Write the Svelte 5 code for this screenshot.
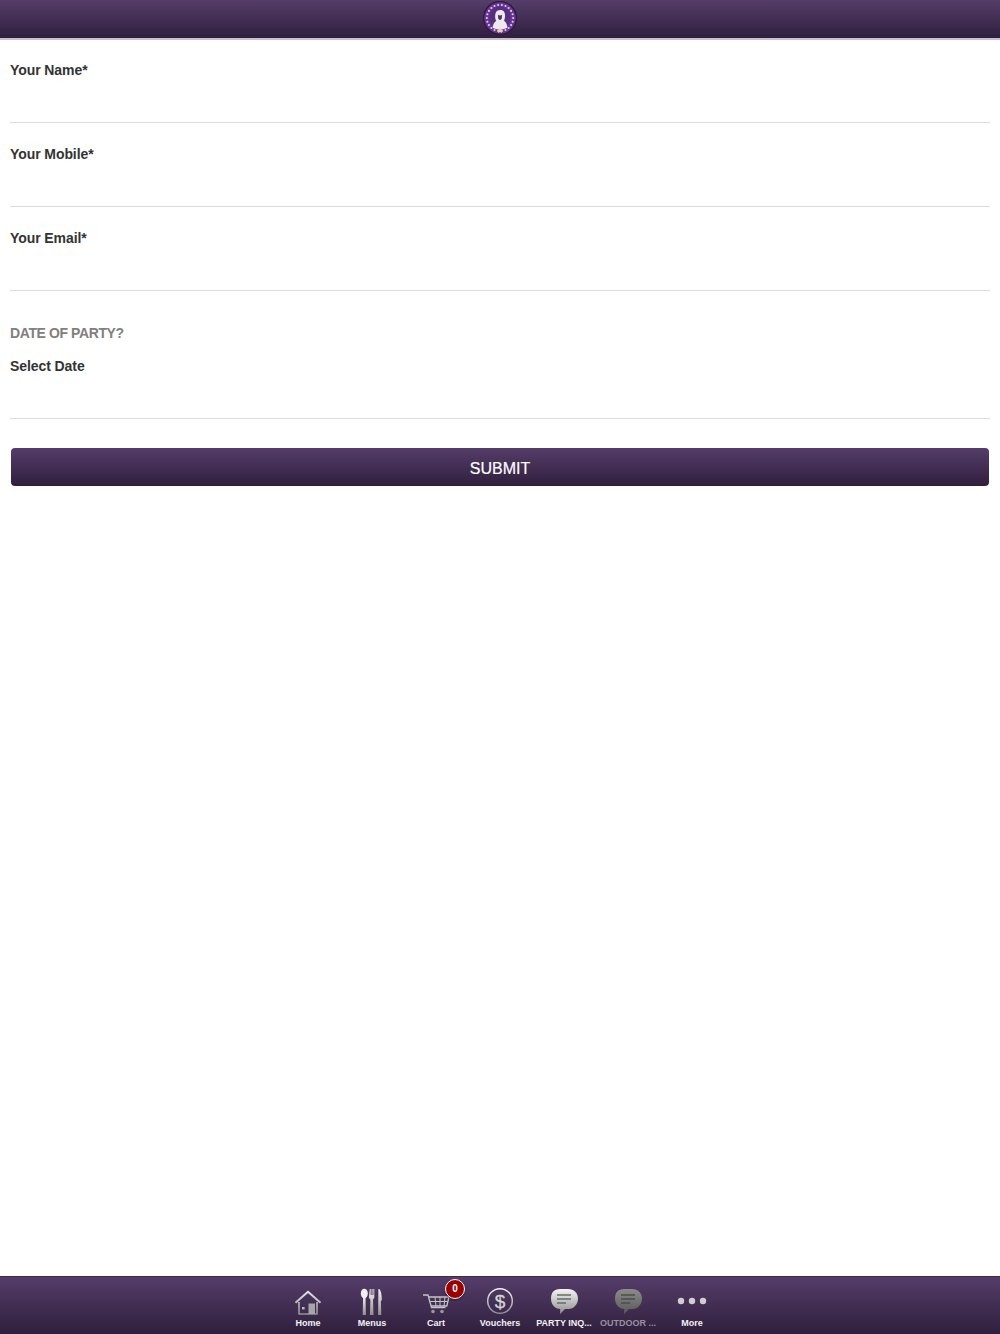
<script>
    const fields = ['Your Name*', 'Your Mobile*', 'Your Email*'];

    const tabs = [
        { id: 'home', label: 'Home' },
        { id: 'menus', label: 'Menus' },
        { id: 'cart', label: 'Cart', badge: 0 },
        { id: 'vouchers', label: 'Vouchers' },
        { id: 'party', label: 'PARTY INQ...' },
        { id: 'outdoor', label: 'OUTDOOR ...', dim: true },
        { id: 'more', label: 'More' }
    ];

    // the lettering round the badge is too small to read, so it is dots
    const ringDots = Array.from({ length: 22 }, (_, i) => {
        const a = (i / 22) * Math.PI * 2;
        return { x: 16 + Math.cos(a) * 12.4, y: 16 + Math.sin(a) * 12.4 };
    });
</script>

<div class="page">

    <header class="top-bar">
        <svg class="logo" width="34" height="34" viewBox="0 0 32 32">
            <circle cx="16" cy="16" r="16" fill="#2a1a38" />
            <circle cx="16" cy="16" r="14.8" fill="#6a3396" />
            {#each ringDots as dot}
                <circle cx={dot.x} cy={dot.y} r="1" fill="#d9cfe2" />
            {/each}
            <circle cx="16" cy="15.5" r="10" fill="#55307c" />
            <path d="M9 25c.4-3 1.600-5 3.400-6.200-1.200-2.400-1.400-6-.2-8.300 1.300-2.500 6.300-2.700 7.800-.2 1.200 2.200 1 5.700-.2 8.200 1.900 1.300 3 3.500 3.200 6.500-2 1.400-4.400 2-7 2s-5.200-.6-7-2z" fill="#efe9ef" />
            <path d="M14 13c1.200.8 2.900.8 4 0l-.4 3.800-1.600 1.200-1.600-1.200z" fill="#4a3560" />
            <path d="M16 25.400l1 1.600 1.800.2-1.300 1.200.3 1.700-1.800-.9-1.800.9.300-1.700-1.300-1.200 1.800-.2z" fill="#e8d8a0" />
        </svg>
    </header>

    <form class="form" on:submit|preventDefault>

        {#each fields as label}
            <div class="field">
                <div class="label">{label}</div>
            </div>
        {/each}

        <div class="heading">DATE OF PARTY?</div>

        <div class="field no-top">
            <div class="label">Select Date</div>
        </div>

        <button class="submit" type="submit">SUBMIT</button>

    </form>

    <nav class="tab-bar">
        <svg class="defs" width="0" height="0">
            <defs>
                <linearGradient id="shine" x1="0" y1="0" x2="0" y2="1">
                    <stop offset="0" stop-color="#f4f4f4" />
                    <stop offset="1" stop-color="#8e8e8e" />
                </linearGradient>
                <linearGradient id="shine-dim" x1="0" y1="0" x2="0" y2="1">
                    <stop offset="0" stop-color="#8c8c8c" />
                    <stop offset="1" stop-color="#585858" />
                </linearGradient>
                <linearGradient id="walls" gradientUnits="userSpaceOnUse" x1="0" y1="5" x2="0" y2="30">
                    <stop offset="0" stop-color="#ececec" />
                    <stop offset="1" stop-color="#8e8e8e" />
                </linearGradient>
            </defs>
        </svg>

        {#each tabs as tab}
            <div class="tab" class:dim={tab.dim}>
                <svg class="icon" width="32" height="32" viewBox="0 0 32 32">
                    {#if tab.id === 'home'}
                        <path d="M3.500 17.800 16 6.800l12.500 11" fill="none" stroke="url(#walls)" stroke-width="2" />
                        <path d="M7 17v12h18V17" fill="none" stroke="url(#walls)" stroke-width="1.600" />
                        <rect x="16.500" y="18.500" width="6.500" height="10.500" fill="#a6a6a6" />
                        <rect x="10" y="22" width="2.600" height="2.400" fill="#bcbcbc" />
                    {:else if tab.id === 'menus'}
                        <g transform="translate(1 1.500)">
                            <ellipse cx="7.300" cy="7" rx="3.500" ry="4.800" fill="#f0f0f0" />
                            <path d="M6.100 10h2.400l.4 18.500H5.700z" fill="url(#shine)" />
                            <path d="M12.800 2.500h.9v6h.9v-6h.9v6h.9v-6h.9v8.300c0 1.300-1 1.900-1.300 2.400l.5 15.300h-3.600l.5-15.300c-.3-.5-1.500-1.100-1.500-2.400z" fill="url(#shine)" />
                            <path d="M22.200 2.500c1.800 1.600 2.600 5.500 2.700 11l-1 1 .4 14h-3.200l.3-26z" fill="url(#shine)" />
                        </g>
                    {:else if tab.id === 'cart'}
                        <g fill="none" stroke="#c4c4c4" stroke-width="1.300">
                            <path d="M3 10h5l3.500 12.500h14" />
                            <path d="M8.800 12H29l-2.200 9H11" />
                            <path d="M10.300 16.500h17.600M15 12l1 9M20 12v9M25 12l-1 9" stroke-width="1" />
                        </g>
                        <circle cx="13" cy="26.500" r="1.800" fill="#9a9a9a" />
                        <circle cx="22" cy="26.500" r="1.800" fill="#9a9a9a" />
                    {:else if tab.id === 'vouchers'}
                        <circle cx="16" cy="16" r="12.300" fill="none" stroke="url(#shine)" stroke-width="1.500" />
                        <text x="16" y="22.800" class="dollar" text-anchor="middle">$</text>
                    {:else if tab.id === 'party' || tab.id === 'outdoor'}
                        <path d="M12 4h8c6 0 10 4 10 9.500S26 24 20.500 24H17l-5 5 .2-5C7 24 3 19.500 3 13.500S6 4 12 4z" fill={tab.dim ? 'url(#shine-dim)' : 'url(#shine)'} />
                        <path d="M9 10h14M9 14h14M9 18h9" stroke={tab.dim ? '#4c4c4c' : '#6a6a6a'} stroke-width="1.400" fill="none" />
                    {:else}
                        <circle cx="5" cy="16" r="3.200" fill="#cfcfcf" />
                        <circle cx="16" cy="16" r="3.200" fill="#cfcfcf" />
                        <circle cx="27" cy="16" r="3.200" fill="#cfcfcf" />
                    {/if}
                </svg>
                <span class="tab-label">{tab.label}</span>
                {#if tab.badge !== undefined}
                    <span class="badge">{tab.badge}</span>
                {/if}
            </div>
        {/each}
    </nav>

</div>

<style>

:global(body){
    margin:0;
    background:#fff;
}

.page{
    display:flex;
    flex-direction:column;
    height:1334px;
    font-family:"Liberation Sans", Arial, sans-serif;
    overflow:hidden;
}

.top-bar{
    display:flex;
    justify-content:center;
    flex:none;
    height:38px;
    background:linear-gradient(#553d69, #2f1f3d);
    border-bottom:2px solid #c9bdd3;
}

.logo{
    margin-top:1px;
}

.form{
    flex:1;
    display:flex;
    flex-direction:column;
    padding:0 10px;
}

.field{
    padding-top:21px;
    height:61px;
    margin-bottom:1px;
    border-bottom:1px solid #dcdcdc;
}

.no-top{
    padding-top:0;
}

.label{
    font-size:14px;
    line-height:18px;
    font-weight:700;
    letter-spacing:-.08px;
    color:#333;
}

.heading{
    margin-top:32px;
    margin-bottom:15px;
    font-size:14px;
    line-height:18px;
    font-weight:700;
    letter-spacing:-.4px;
    color:#808080;
}

.submit{
    margin:28px 1px 0;
    height:38px;
    padding:4px 0 0;
    border:none;
    border-radius:4px;
    background:linear-gradient(#553d69, #2f1f3d);
    color:#fff;
    font-family:inherit;
    font-size:16px;
    -webkit-text-stroke:.2px #fff;
}

.tab-bar{
    flex:none;
    display:flex;
    justify-content:center;
    height:58px;
    background:linear-gradient(#553d69, #2f1f3d);
    border-top:1px solid #3d2b4c;
    box-sizing:border-box;
}

.defs{
    position:absolute;
}

.tab{
    position:relative;
    display:flex;
    flex-direction:column;
    align-items:center;
    width:64px;
    padding-top:8px;
}

.icon{
    display:block;
}

.tab-label{
    font-size:9px;
    line-height:12px;
    font-weight:700;
    color:#f2f2f2;
    white-space:nowrap;
}

.dim .tab-label{
    color:#98909e;
}

.dollar{
    font-family:"Liberation Sans", Arial, sans-serif;
    font-size:19px;
    fill:#d4d4d4;
    stroke:#d4d4d4;
    stroke-width:.3px;
}

.badge{
    position:absolute;
    top:2px;
    left:41px;
    width:18px;
    height:18px;
    border:1.5px solid #fff;
    border-radius:50%;
    background:#9a0000;
    color:#fff;
    font-size:10px;
    font-weight:700;
    line-height:18px;
    text-align:center;
    box-shadow:0 1px 2px rgba(0,0,0,.5);
}

</style>
